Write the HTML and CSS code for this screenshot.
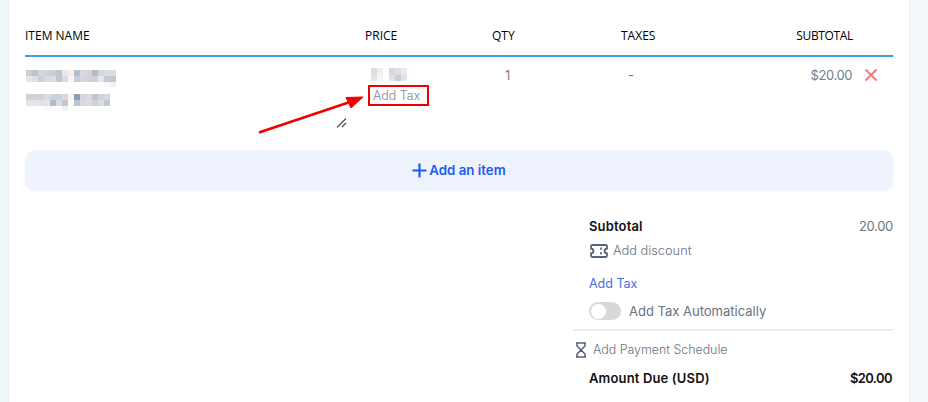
FILE: index.html
```html
<!DOCTYPE html>
<html lang="en">
<head>
    <meta charset="UTF-8">
    <title>Invoice items</title>
    <link rel="stylesheet" href="styles.css">
</head>
<body>
    <div class="card">
        <div class="item-table">
            <div class="table-row table-head">
                <div>ITEM NAME</div>
                <div>PRICE</div>
                <div>QTY</div>
                <div class="head-taxes">TAXES</div>
                <div class="cell-right head-subtotal">SUBTOTAL</div>
                <div></div>
            </div>
            <div class="table-row table-item">
                <div class="item-name">
                    <svg class="mosaic" width="96" height="44" viewBox="0 0 96 44" shape-rendering="crispEdges">
                        <rect x="0" y="0" width="6" height="6" fill="#c8cdd6"/><rect x="6" y="0" width="6" height="6" fill="#bcc6d0"/><rect x="12" y="0" width="6" height="6" fill="#d4d6dc"/><rect x="18" y="0" width="6" height="6" fill="#cdd3da"/><rect x="24" y="0" width="6" height="6" fill="#c8d0d6"/><rect x="30" y="0" width="6" height="6" fill="#c2c5cb"/><rect x="36" y="0" width="6" height="6" fill="#e6e9ee"/><rect x="42" y="0" width="6" height="6" fill="#f5f1ea"/><rect x="48" y="0" width="6" height="6" fill="#b4bfcc"/><rect x="54" y="0" width="6" height="6" fill="#d5d8dc"/><rect x="60" y="0" width="6" height="6" fill="#d4d6da"/><rect x="66" y="0" width="6" height="6" fill="#bab9c9"/><rect x="72" y="0" width="6" height="6" fill="#d5d9df"/><rect x="78" y="0" width="12" height="6" fill="#d8dde2"/>
                        <rect x="0" y="6" width="6" height="6" fill="#e4e6e8"/><rect x="6" y="6" width="6" height="6" fill="#dedfe2"/><rect x="12" y="6" width="6" height="6" fill="#cccdd5"/><rect x="18" y="6" width="6" height="6" fill="#d8dadf"/><rect x="24" y="6" width="6" height="6" fill="#dadde3"/><rect x="30" y="6" width="6" height="6" fill="#c5c6ca"/><rect x="36" y="6" width="6" height="6" fill="#d8dce6"/><rect x="42" y="6" width="6" height="6" fill="#fbf6f3"/><rect x="48" y="6" width="6" height="6" fill="#c8ced8"/><rect x="54" y="6" width="6" height="6" fill="#d4d6da"/><rect x="60" y="6" width="6" height="6" fill="#d2d3d8"/><rect x="66" y="6" width="6" height="6" fill="#d0d0d8"/><rect x="72" y="6" width="6" height="6" fill="#e2e8ec"/><rect x="78" y="6" width="6" height="6" fill="#c8ccd0"/><rect x="84" y="6" width="6" height="6" fill="#c4c8cc"/>
                        <rect x="78" y="12" width="6" height="5" fill="#f5f7fa"/><rect x="84" y="12" width="6" height="5" fill="#edf2f7"/>
                        <rect x="0" y="24" width="6" height="6" fill="#d2d3d8"/><rect x="6" y="24" width="6" height="6" fill="#d0d2d6"/><rect x="12" y="24" width="6" height="6" fill="#ced3dc"/><rect x="18" y="24" width="6" height="6" fill="#dcdfe2"/><rect x="24" y="24" width="6" height="6" fill="#cdd3dc"/><rect x="30" y="24" width="6" height="6" fill="#cbd1d9"/><rect x="36" y="24" width="6" height="6" fill="#d8dadc"/><rect x="42" y="24" width="6" height="6" fill="#f8f6f2"/><rect x="48" y="24" width="6" height="6" fill="#8e9db2"/><rect x="54" y="24" width="6" height="6" fill="#d3d6dc"/><rect x="60" y="24" width="6" height="6" fill="#ddd9d9"/><rect x="66" y="24" width="6" height="6" fill="#bcc6d2"/><rect x="72" y="24" width="6" height="6" fill="#ced3da"/><rect x="78" y="24" width="6" height="6" fill="#d6d8dc"/>
                        <rect x="0" y="30" width="6" height="6" fill="#e4e5e8"/><rect x="6" y="30" width="6" height="6" fill="#e2e4e6"/><rect x="12" y="30" width="6" height="6" fill="#dbe2ea"/><rect x="18" y="30" width="6" height="6" fill="#e8e2de"/><rect x="24" y="30" width="6" height="6" fill="#b0bccf"/><rect x="30" y="30" width="6" height="6" fill="#d6dce2"/><rect x="36" y="30" width="6" height="6" fill="#c4c7cc"/><rect x="42" y="30" width="6" height="6" fill="#fbfaf8"/><rect x="48" y="30" width="6" height="6" fill="#bcc4d0"/><rect x="54" y="30" width="6" height="6" fill="#d6d9dd"/><rect x="60" y="30" width="6" height="6" fill="#dcdcdc"/><rect x="66" y="30" width="6" height="6" fill="#cdd3d9"/><rect x="72" y="30" width="6" height="6" fill="#dadde2"/><rect x="78" y="30" width="6" height="6" fill="#c4c7cc"/>
                        <rect x="18" y="36" width="12" height="5" fill="#fbfbfd"/><rect x="36" y="36" width="6" height="5" fill="#eef1f6"/>
                    </svg>
                </div>
                <div class="item-price">
                    <svg class="mosaic" width="37" height="13" viewBox="0 0 37 13" shape-rendering="crispEdges">
                        <rect x="0" y="0" width="6" height="7" fill="#dcdcde"/><rect x="6" y="0" width="6" height="7" fill="#eeeff1"/><rect x="18" y="0" width="6" height="7" fill="#d6d8dc"/><rect x="24" y="0" width="6" height="7" fill="#dfe1e5"/><rect x="30" y="0" width="6" height="7" fill="#e8eaef"/>
                        <rect x="0" y="7" width="6" height="6" fill="#e4e5e7"/><rect x="6" y="7" width="6" height="6" fill="#f3f5f7"/><rect x="18" y="7" width="6" height="6" fill="#dfe1e5"/><rect x="24" y="7" width="6" height="6" fill="#c8cdd6"/><rect x="30" y="7" width="6" height="6" fill="#e0e3e8"/>
                    </svg>
                    <div class="price-tax">Add Tax</div>
                </div>
                <div class="item-qty">1</div>
                <div class="item-tax">-</div>
                <div class="cell-right item-total">$20.00</div>
                <div class="item-remove">
                    <svg width="14" height="14" viewBox="0 0 14 14"><path d="M1.5 1.5 12.5 12.5M12.5 1.5 1.5 12.5" stroke="#f67a7a" stroke-width="2" fill="none"/></svg>
                </div>
            </div>
        </div>

        <div class="add-item">
            <svg width="15" height="15" viewBox="0 0 15 15"><path d="M7.5 0.5V14.5M0.5 7.5H14.5" stroke="#1a5cf0" stroke-width="2.2" fill="none"/></svg>
            <span>Add an item</span>
        </div>

        <div class="summary">
            <div class="summary-line line-subtotal">
                <span class="strong label">Subtotal</span>
                <span class="value">20.00</span>
            </div>
            <div class="summary-action line-discount">
                <svg width="18" height="14" viewBox="0 0 18 14"><path d="M2.5 1H15.5A1.5 1.5 0 0 1 17 2.5V4.6A2.4 2.4 0 0 0 17 9.4V11.5A1.5 1.5 0 0 1 15.5 13H2.5A1.5 1.5 0 0 1 1 11.5V9.4A2.4 2.4 0 0 0 1 4.6V2.5A1.5 1.5 0 0 1 2.5 1Z" stroke="#55627a" stroke-width="1.8" fill="none"/><path d="M11 3.5V6M11 8V10.5" stroke="#55627a" stroke-width="1.6" fill="none"/></svg>
                <span>Add discount</span>
            </div>
            <div class="tax-link">Add Tax</div>
            <div class="tax-auto">
                <span class="toggle"><span class="toggle-knob"></span></span>
                <span>Add Tax Automatically</span>
            </div>
            <div class="schedule">
                <svg width="12" height="16" viewBox="0 0 12 16"><path d="M1 1H11M1 15H11M2 1V4L6 8 2 12V15M10 1V4L6 8 10 12V15" stroke="#55627a" stroke-width="1.5" fill="none"/></svg>
                <span>Add Payment Schedule</span>
            </div>
            <div class="summary-line line-due">
                <span class="strong label">Amount Due (USD)</span>
                <span class="strong due-value">$20.00</span>
            </div>
        </div>

        <!-- annotation over the screenshot -->
        <div class="note-box"></div>
        <svg class="note-arrow" width="120" height="50" viewBox="0 0 120 50">
            <path d="M1 41.5 92 11" stroke="#f00000" stroke-width="2.8" fill="none"/>
            <path d="M105 6 88 6.5 93 17Z" fill="#f00000" stroke="#f00000" stroke-width="1"/>
        </svg>
        <svg class="resize-grip" width="12" height="12" viewBox="0 0 12 12">
            <path d="M1 10.5 10 1.5M6 10 10 6" stroke="#555" stroke-width="1.3" fill="none"/>
        </svg>
    </div>
</body>
</html>
```

FILE: styles.css
```css
html, body {
    margin: 0;
    height: 402px;
    overflow: hidden;
}
body {
    background-color: #f2f7fa;
    font-family: Inter, "Open Sans", sans-serif;
    font-size: 13px;
    color: #6b7280;
}
.card {
    position: relative;
    box-sizing: border-box;
    width: 900px;
    height: 402px;
    margin-left: 9px;
    padding: 0 16px;
    background: white;
    box-shadow: 0 0 2px rgba(0,0,0,0.08);
}
.table-row {
    display: grid;
    grid-template-columns: 340px 127px 128px 1fr 100px 40px;
}
.table-head {
    box-sizing: border-box;
    height: 57px;
    padding-top: 28px;
    border-bottom: 2px solid #3b9ddd;
    font-family: "Open Sans", sans-serif;
    font-size: 12px;
    line-height: 16px;
    color: #000;
}
.head-taxes {
    padding-left: 1px;
}
.head-subtotal {
    letter-spacing: -0.35px;
}
.cell-right {
    text-align: right;
}
.table-item {
    height: 93px;
    line-height: 16px;
}
.item-name {
    padding: 13px 0 0 1px;
}
.mosaic {
    display: block;
}
.item-price {
    padding-top: 11px;
    padding-left: 6px;
}
.price-tax {
    margin-top: 7px;
    margin-left: 2px;
    font-size: 12.4px;
    font-weight: 300;
    color: #7d8799;
}
.item-qty {
    padding: 10px 0 0 13px;
    color: #8f7d7d;
}
.item-tax {
    padding: 10px 0 0 8px;
}
.item-total {
    padding: 10px 1px 0 0;
    letter-spacing: -0.4px;
    color: #6f7f92;
}
.item-remove {
    padding: 11px 0 0 11px;
}
.add-item {
    display: flex;
    align-items: center;
    justify-content: center;
    gap: 2px;
    height: 41px;
    padding-bottom: 1px;
    box-sizing: border-box;
    border-radius: 10px;
    background-color: #eff3fd;
    box-shadow: 0 1px 2px rgba(0,0,0,0.03);
    font-size: 13.3px;
    font-weight: 600;
    color: #1a5cf0;
}
.summary {
    width: 320px;
    margin-left: auto;
    padding-top: 26px;
}
.summary-line {
    display: flex;
    justify-content: space-between;
    padding-left: 16px;
    line-height: 18px;
}
.strong {
    font-weight: 600;
    color: #111;
}
.label {
    letter-spacing: 0.15px;
}
.due-value {
    margin-right: 1px;
    letter-spacing: -0.6px;
}
.value {
    letter-spacing: -0.3px;
    color: #6f7580;
}
.summary-action {
    display: flex;
    align-items: center;
    gap: 5px;
    margin-top: 7px;
    padding-left: 17px;
    line-height: 18px;
    font-size: 12.8px;
    font-weight: 300;
}
.tax-link {
    margin-top: 15px;
    padding-left: 16px;
    line-height: 18px;
    font-size: 12.5px;
    color: #3b6fe8;
}
.tax-auto {
    display: flex;
    align-items: center;
    gap: 8px;
    margin-top: 9px;
    padding: 0 0 9px 16px;
    border-bottom: 2px solid #ececf1;
}
.toggle {
    display: block;
    width: 32px;
    height: 18px;
    border-radius: 9px;
    background-color: #d8d8d8;
}
.toggle-knob {
    display: block;
    width: 15px;
    height: 15px;
    margin: 1.5px;
    border-radius: 50%;
    background: white;
}
.schedule {
    display: flex;
    align-items: center;
    gap: 6px;
    margin-top: 10px;
    padding-left: 2px;
    line-height: 18px;
    font-size: 12.4px;
    font-weight: 300;
}
.line-due {
    margin-top: 10px;
}
.note-box {
    position: absolute;
    left: 359px;
    top: 85px;
    box-sizing: border-box;
    width: 61px;
    height: 21px;
    border: 2px solid #f00000;
}
.note-arrow {
    position: absolute;
    left: 249px;
    top: 91px;
}
.resize-grip {
    position: absolute;
    left: 327px;
    top: 117px;
}
```
